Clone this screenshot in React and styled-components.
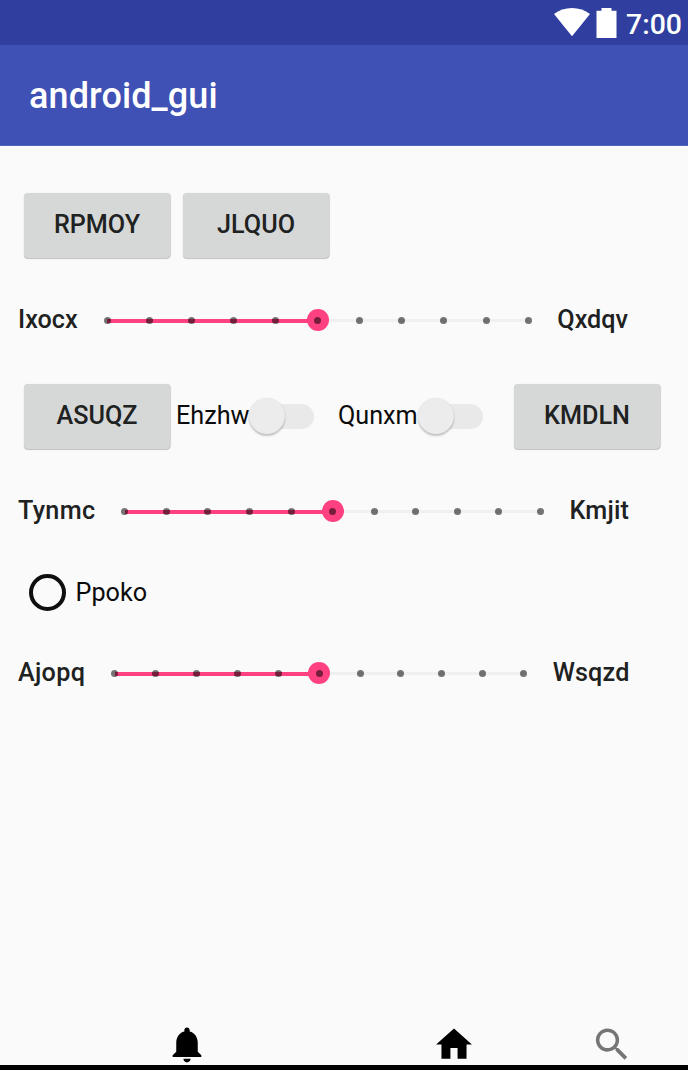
import React from "react";
import styled, { createGlobalStyle } from "styled-components";

const GlobalStyle = createGlobalStyle`
  * { box-sizing: border-box; }
  body { margin: 0; background: #fafafa; font-family: Roboto, sans-serif; }
`;

const Screen = styled.div`
  width: 688px;
  height: 1070px;
  display: flex;
  flex-direction: column;
  overflow: hidden;
  background: #fafafa;
  color: #202121;
`;

const StatusBar = styled.header`
  height: 45px;
  flex: none;
  display: flex;
  justify-content: flex-end;
  align-items: flex-start;
  padding: 8px 6px 0 0;
  background: #303f9f;
`;

const WifiIcon = styled.svg`
  width: 36px;
  height: 29px;
  margin-right: 6px;
`;

const BatteryIcon = styled.svg`
  width: 21px;
  height: 30px;
  margin-right: 9px;
`;

const Clock = styled.span`
  color: #fff;
  font-size: 28.4px;
  font-weight: 500;
  line-height: 34px;
`;

const AppBar = styled.div`
  height: 101px;
  flex: none;
  display: flex;
  align-items: center;
  padding: 2px 0 0 29px;
  background: #3f51b5;
  border-bottom: 1px solid #5263bd;
`;

const Title = styled.h1`
  margin: 0;
  color: #fff;
  font-size: 36px;
  font-weight: 500;
  line-height: 42px;
  letter-spacing: 0.1px;
`;

const Content = styled.main`
  flex: 1;
  display: flex;
  flex-direction: column;
  padding-top: 47px;
`;

const ControlRow = styled.div`
  display: flex;
  align-items: center;
  flex: none;
  height: 65px;
  padding-left: 24px;
  margin-top: ${(p) => p.$top || 0}px;
`;

const Button = styled.button`
  flex: none;
  width: 146px;
  height: 65px;
  padding: 0 0 1px;
  margin-right: ${(p) => p.$after || 0}px;
  border: 0;
  border-radius: 4px;
  background: #d6d8d7;
  box-shadow: 0 1px 1px rgba(0, 0, 0, 0.22), 0.5px 0 1px rgba(0, 0, 0, 0.14);
  color: #202121;
  font: 500 25.2px/30px Roboto, sans-serif;
`;

const SwitchField = styled.label`
  display: flex;
  align-items: center;
  width: ${(p) => p.$width}px;
`;

const ControlText = styled.span`
  color: #0b0b0b;
  font-size: 25.2px;
  line-height: 30px;
  padding-bottom: ${(p) => (p.$level ? 0 : 1)}px;
`;

const SwitchTrack = styled.span`
  display: flex;
  align-items: center;
  width: 57px;
  height: 25px;
  margin: 0 0 1px 8px;
  border-radius: 13px;
  background: #e9e9e9;
`;

const SwitchThumb = styled.span`
  flex: none;
  width: 36px;
  height: 36px;
  margin-left: -8px;
  border-radius: 50%;
  background: #ececec;
  box-shadow: 0 2px 2px rgba(0, 0, 0, 0.22), 0 0 1px rgba(0, 0, 0, 0.12);
`;

const SliderRow = styled.div`
  display: flex;
  align-items: center;
  flex: none;
  height: 61px;
  width: ${(p) => p.$width}px;
  padding-left: 18px;
  margin-top: ${(p) => p.$top}px;
`;

const SliderLabel = styled.span`
  font-size: 25.2px;
  font-weight: 500;
  line-height: 30px;
  letter-spacing: ${(p) => p.$tracking || 0}px;
  padding-bottom: 1px;
`;

const Rail = styled.div`
  position: relative;
  flex: 1;
  height: 3px;
  margin: 0 29px 0 29.5px;
  background: #f0f0f0;
`;

const RailFill = styled.div`
  width: 50%;
  height: 4px;
  background: #ff4081;
`;

const Thumb = styled.span`
  position: absolute;
  left: 50%;
  top: 1px;
  width: 22px;
  height: 22px;
  transform: translate(-50%, -50%);
  border-radius: 50%;
  background: #ff4081;
`;

const Ticks = styled.div`
  position: absolute;
  inset: -2px -3.5px;
  display: flex;
  align-items: center;
  justify-content: space-between;
`;

const Tick = styled.i`
  width: 7px;
  height: 7px;
  border-radius: 50%;
  background: rgba(0, 0, 0, 0.54);
`;

const RadioRing = styled.span`
  width: 37px;
  height: 37px;
  margin: 0 9.500px 0 5px;
  border: 4px solid #0f0f0f;
  border-radius: 50%;
`;

const BottomNav = styled.nav`
  height: 48px;
  flex: none;
  display: flex;
  align-items: flex-start;
  padding: 0.5px 0 0 165px;
  border-bottom: 5px solid #000;
`;

const NavIcon = styled.svg`
  flex: none;
  width: 44px;
  height: 43px;
  fill: ${(p) => p.$color || "#000"};
  margin-top: ${(p) => p.$drop || 0}px;
  margin-right: ${(p) => p.$after || 0}px;
`;

function Slider({ start, end, top, width, tracking }) {
  return (
    <SliderRow $top={top} $width={width}>
      <SliderLabel $tracking={tracking}>{start}</SliderLabel>
      <Rail>
        <RailFill />
        <Thumb />
        <Ticks>
          {Array.from({ length: 11 }, (_, i) => (
            <Tick key={i} />
          ))}
        </Ticks>
      </Rail>
      <SliderLabel $tracking={tracking / 2}>{end}</SliderLabel>
    </SliderRow>
  );
}

function Switch({ text, width }) {
  return (
    <SwitchField $width={width}>
      <ControlText>{text}</ControlText>
      <SwitchTrack>
        <SwitchThumb />
      </SwitchTrack>
    </SwitchField>
  );
}

export default function App() {
  return (
    <Screen>
      <GlobalStyle />
      <StatusBar>
        <WifiIcon viewBox="0 0 36 29">
          <path d="M0 6C5 2.1 11.3 0 18 0s13 2.1 18 6L18 28.3z" fill="#fff" />
        </WifiIcon>
        <BatteryIcon viewBox="0 0 21 30">
          <path d="M5.5 0h10v2.7H20.5V30H0.5V2.7h5z" fill="#fff" />
        </BatteryIcon>
        <Clock>7:00</Clock>
      </StatusBar>
      <AppBar>
        <Title>android_gui</Title>
      </AppBar>
      <Content>
        <ControlRow>
          <Button $after={13}>RPMOY</Button>
          <Button>JLQUO</Button>
        </ControlRow>
        <Slider start="Ixocx" end="Qxdqv" top={32} width={628} tracking={0} />
        <ControlRow $top={33}>
          <Button $after={6}>ASUQZ</Button>
          <Switch text="Ehzhw" width={162} />
          <Switch text="Qunxm" width={176} />
          <Button>KMDLN</Button>
        </ControlRow>
        <Slider start="Tynmc" end="Kmjit" top={32} width={629} tracking={0.3} />
        <ControlRow $top={18}>
          <RadioRing />
          <ControlText $level>Ppoko</ControlText>
        </ControlRow>
        <Slider start="Ajopq" end="Wsqzd" top={18} width={629.5} tracking={0.3} />
      </Content>
      <BottomNav>
        <NavIcon viewBox="0 0 24 24" $after={222.5}>
          <path d="M12 22c1.1 0 2-.9 2-2h-4c0 1.1.89 2 2 2zm6-6v-5c0-3.07-1.64-5.64-4.5-6.32V4c0-.83-.67-1.5-1.5-1.5s-1.5.67-1.5 1.5v.68C7.63 5.36 6 7.92 6 11v5l-2 2v1h16v-1l-2-2z" />
        </NavIcon>
        <NavIcon viewBox="0 0 24 24" $after={114.5} $drop={0.5}>
          <path d="M10 20v-6h4v6h5v-8h3L12 3 2 12h3v8z" />
        </NavIcon>
        <NavIcon viewBox="0 0 24 24" $color="#757575" $drop={0.5}>
          <path d="M15.5 14h-.79l-.28-.27C15.41 12.59 16 11.11 16 9.5 16 5.91 13.09 3 9.5 3S3 5.91 3 9.5 5.91 16 9.5 16c1.61 0 3.09-.59 4.23-1.57l.27.28v.79l5 4.99L20.49 19l-4.99-5zm-6 0C7.01 14 5 11.99 5 9.5S7.01 5 9.5 5 14 7.01 14 9.5 11.99 14 9.5 14z" />
        </NavIcon>
      </BottomNav>
    </Screen>
  );
}
